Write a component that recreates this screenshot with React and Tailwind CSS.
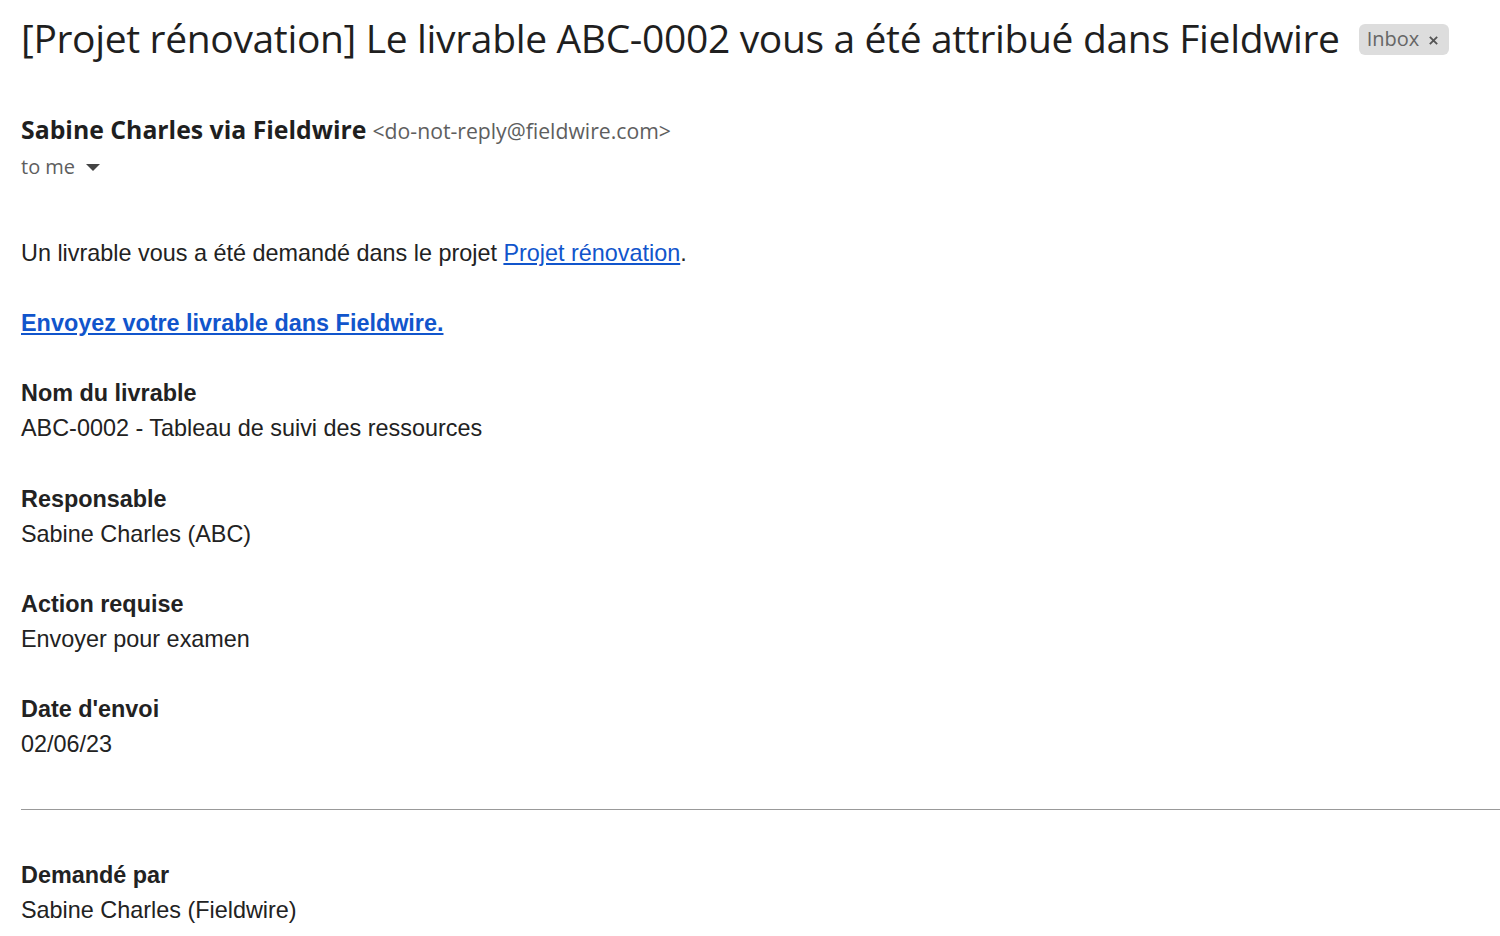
export default function App() {
  return (
    <div className="w-[1500px] h-[936px] overflow-hidden bg-white pl-[21px]">
      <div className="flex items-center pt-[10px] h-[66px]">
        <h1 className="text-[39px] leading-[52px] text-[#1f1f1f] font-['Open_Sans',sans-serif] tracking-[-0.35px] whitespace-nowrap">
          [Projet rénovation] Le livrable ABC-0002 vous a été attribué dans Fieldwire
        </h1>
        <span className="ml-[19px] mt-[2px] flex items-center gap-[9px] rounded-[6px] bg-[#dddddd] pl-[8px] pr-[10px] h-[31px] text-[20px] text-[#666666] font-['Open_Sans',sans-serif]">
          Inbox
          <svg width="11" height="11" viewBox="0 0 12 12" className="mt-[3px]">
            <path d="M2 2 L10 10 M10 2 L2 10" stroke="#555" strokeWidth="2" />
          </svg>
        </span>
      </div>
      <div className="mt-[45px] flex items-baseline font-['Open_Sans',sans-serif]">
        <span className="text-[24.8px] font-bold text-[#1f1f1f]">Sabine Charles via Fieldwire</span>
        <span className="ml-[6px] text-[21.2px] text-[#5e5e5e]">&lt;do-not-reply@fieldwire.com&gt;</span>
      </div>
      <div className="mt-[4px] flex items-center gap-[10px] text-[20px] text-[#5e5e5e] font-['Open_Sans',sans-serif]">
        <span>to me</span>
        <svg width="16" height="10" viewBox="0 0 16 10" className="mt-[2px]">
          <path d="M1 1 L15 1 L8 8 Z" fill="#444" />
        </svg>
      </div>
      <div className="mt-[54px] text-[23.4px] leading-[35px] text-[#222222] font-['Liberation_Sans',Arial,sans-serif]">
        <p>
          Un livrable vous a été demandé dans le projet{" "}
          <a className="text-[#1155cc] underline">Projet rénovation</a>.
        </p>
        <p className="mt-[35px]">
          <a className="text-[#1155cc] underline font-bold">Envoyez votre livrable dans Fieldwire.</a>
        </p>
        <div className="mt-[35px]">
          <p className="font-bold">Nom du livrable</p>
          <p>ABC-0002 - Tableau de suivi des ressources</p>
        </div>
        <div className="mt-[36px]">
          <p className="font-bold">Responsable</p>
          <p>Sabine Charles (ABC)</p>
        </div>
        <div className="mt-[35px]">
          <p className="font-bold">Action requise</p>
          <p>Envoyer pour examen</p>
        </div>
        <div className="mt-[35px]">
          <p className="font-bold">Date d'envoi</p>
          <p>02/06/23</p>
        </div>
        <hr className="mt-[47px] border-0 border-t border-[#999999]" />
        <div className="mt-[48px]">
          <p className="font-bold">Demandé par</p>
          <p>Sabine Charles (Fieldwire)</p>
        </div>
      </div>
    </div>
  );
}
